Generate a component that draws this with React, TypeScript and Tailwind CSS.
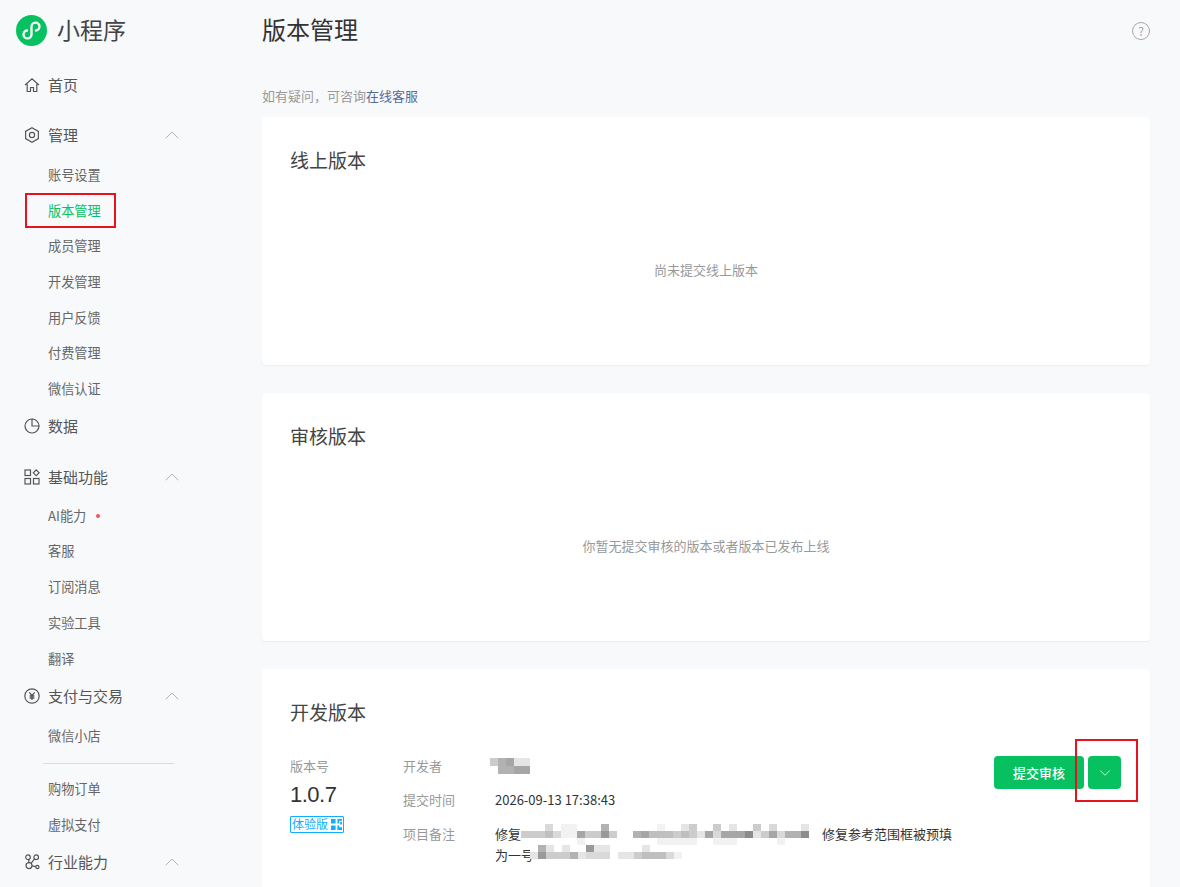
import React from 'react';
import { ChevronUp, ChevronDown } from 'lucide-react';

const FONT = '"Noto Sans CJK SC", "Liberation Sans", sans-serif';

const iconProps = {
  width: 16,
  height: 16,
  viewBox: '0 0 16 16',
  fill: 'none',
  stroke: 'currentColor',
  strokeWidth: 1.2,
};

const HomeIcon = () => (
  <svg {...iconProps}>
    <path d="M1 8l7-6.2L15 8M3.2 7v7.5h3.3v-4h3v4h3.3V7" />
  </svg>
);

const HexIcon = () => (
  <svg {...iconProps}>
    <path d="M8 .8l6.4 3.6v7.2L8 15.2l-6.4-3.6V4.4z" />
    <circle cx="8" cy="8" r="2.6" />
  </svg>
);

const PieIcon = () => (
  <svg {...iconProps}>
    <path d="M8 1a7 7 0 1 0 7 7H8z" />
    <path d="M8 1a7 7 0 0 1 7 7" />
  </svg>
);

const GridIcon = () => (
  <svg {...iconProps}>
    <rect x="1" y="1" width="5.5" height="5.5" />
    <rect x="1" y="9.5" width="5.5" height="5.5" />
    <rect x="9.5" y="9.5" width="5.5" height="5.5" />
    <path d="M12.2.9l2.9 2.9-2.9 2.9-2.9-2.9z" />
  </svg>
);

const YuanIcon = () => (
  <svg {...iconProps}>
    <circle cx="8" cy="8" r="7.2" />
    <path d="M5.4 4.4L8 7.6l2.6-3.2M8 7.6v4.4M5.6 8h4.8M5.6 10h4.8" strokeWidth="1.3" />
  </svg>
);

const NodesIcon = () => (
  <svg {...iconProps}>
    <circle cx="4" cy="3.2" r="2.3" />
    <circle cx="12.2" cy="3.2" r="2.3" />
    <circle cx="5" cy="11.6" r="3" />
    <circle cx="13.4" cy="13" r="1.6" />
    <path d="M4.6 5.4l.4 3.2M10.6 4.8L7 9.4M8 11.9l3.9.7" />
  </svg>
);

const MainItem = ({ icon, label, expandable = false, className = '' }: { icon: React.ReactNode; label: string; expandable?: boolean; className?: string }) => (
  <div className={`flex items-center h-[24px] pl-[24px] pr-[78px] text-[15px] text-[#555] ${className}`}>
    <span className="w-[24px] shrink-0 flex text-[#555]">{icon}</span>
    <span className="flex-1">{label}</span>
    {expandable && <ChevronUp className="w-[24px] h-[24px] text-[#b4b4b4]" strokeWidth={1} />}
  </div>
);

const SubItem = ({ label, active = false, dot = false, boxed = false }: { label: string; active?: boolean; dot?: boolean; boxed?: boolean }) => (
  <div className={`relative flex items-center h-[35.7px] pl-[48px] text-[13.2px] ${active ? 'text-[#07c160]' : 'text-[#666]'}`}>
    {label}
    {dot && <span className="ml-[10px] w-[4px] h-[4px] rounded-full bg-[#fa5151]" />}
    {boxed && <span className="absolute left-[25px] top-0 w-[91px] h-[35px] border-2 border-[#e8121e]" />}
  </div>
);

const Sidebar = () => (
  <aside className="w-[262px] shrink-0">
    <div className="flex items-center h-[60px] pl-[16px]">
      <svg width="31" height="31" viewBox="0 0 31 31" className="shrink-0">
        <circle cx="15.5" cy="15.5" r="15.5" fill="#07c160" />
        <path d="M11 15.5a4 4 0 1 0 4.5 4v-8a4 4 0 1 1 4.5 4" fill="none" stroke="#fff" strokeWidth="2.3" strokeLinecap="round" />
      </svg>
      <span className="ml-[10px] -mt-[2px] text-[23px] text-[#444]">小程序</span>
    </div>
    <MainItem icon={<HomeIcon />} label="首页" className="mt-[13px]" />
    <MainItem icon={<HexIcon />} label="管理" expandable className="mt-[26px]" />
    <div className="mt-[10px]">
      <SubItem label="账号设置" />
      <SubItem label="版本管理" active boxed />
      <SubItem label="成员管理" />
      <SubItem label="开发管理" />
      <SubItem label="用户反馈" />
      <SubItem label="付费管理" />
      <SubItem label="微信认证" />
    </div>
    <MainItem icon={<PieIcon />} label="数据" className="mt-[7px]" />
    <MainItem icon={<GridIcon />} label="基础功能" expandable className="mt-[27px]" />
    <div className="mt-[9px]">
      <SubItem label="AI能力" dot />
      <SubItem label="客服" />
      <SubItem label="订阅消息" />
      <SubItem label="实验工具" />
      <SubItem label="翻译" />
    </div>
    <MainItem icon={<YuanIcon />} label="支付与交易" expandable className="mt-[8px]" />
    <div className="mt-[10px]">
      <SubItem label="微信小店" />
      <div className="ml-[43px] w-[131px] h-px bg-[#dcdde0] mt-[9px] mb-[7px]" />
      <SubItem label="购物订单" />
      <SubItem label="虚拟支付" />
    </div>
    <MainItem icon={<NodesIcon />} label="行业能力" expandable className="mt-[8px]" />
  </aside>
);

const EmptyCard = ({ title, text }: { title: string; text: string }) => (
  <section className="h-[248px] bg-white rounded-[4px] shadow-[0_1px_2px_rgba(0,0,0,0.06)] px-[28px] pt-[29px] flex flex-col">
    <h2 className="text-[19px] leading-[28px] text-[#444] font-normal">{title}</h2>
    <p className="text-center text-[13px] leading-[20px] text-[#999] mt-[86px]">{text}</p>
  </section>
);

// 打码区块：每个字符是一格的灰度，0-9 对应 0-45% 的黑
const Pixelated = ({ rows, w, h, className = '' }: { rows: string[]; w: number; h: number; className?: string }) => (
  <svg width={rows[0].length * w} height={rows.length * h} className={`shrink-0 ${className}`}>
    {rows.flatMap((row, y) =>
      row.split('').map((c, x) =>
        c === '.' ? null : (
          <rect key={`${x}-${y}`} x={x * w} y={y * h} width={w} height={h} fill="#000" opacity={Number(c) / 20} />
        ),
      ),
    )}
  </svg>
);

const DevRow = ({ label, children, className = '' }: { label: string; children: React.ReactNode; className?: string }) => (
  <div className={`flex text-[13px] leading-[20px] ${className}`}>
    <span className="w-[92px] shrink-0 text-[#999]">{label}</span>
    <div className="text-[#333]">{children}</div>
  </div>
);

const DevCard = () => (
  <section className="h-[260px] bg-white rounded-[4px] shadow-[0_1px_2px_rgba(0,0,0,0.06)] px-[28px] pt-[29px]">
    <h2 className="text-[19px] leading-[28px] text-[#444] font-normal">开发版本</h2>
    <div className="flex mt-[30px]">
      <div className="w-[113px] shrink-0">
        <div className="text-[13px] leading-[20px] text-[#999]">版本号</div>
        <div className="text-[22px] leading-[30px] mt-[4px] tracking-[-0.5px] text-[#333]" style={{ fontFamily: '"Liberation Sans", sans-serif' }}>1.0.7</div>
        <div className="inline-flex items-center h-[17px] mt-[1px] px-[1px] border border-[#10aeff] rounded-[1px] text-[12px] leading-none text-[#10aeff]">
          体验版
          <svg width="11" height="11" viewBox="0 0 12 12" fill="#10aeff" className="ml-[3px]">
            <path d="M0 0h5v5H0zM7 0h5v2H9v3H7zM0 7h5v5H0zM7 7h2v2h3v3H7zM10 3h2v3h-2z" />
          </svg>
        </div>
      </div>
      <div className="flex-1">
        <DevRow label="开发者">
          <Pixelated w={8} h={8} className="mt-[2px] -ml-[5px]" rows={['46722', '.6677']} />
        </DevRow>
        <DevRow label="提交时间" className="mt-[14px]">2026-09-13 17:38:43</DevRow>
        <DevRow label="项目备注" className="mt-[14px]">
          <div className="w-[470px]">
            <div className="flex items-start h-[21px] whitespace-nowrap">
              修复
              <Pixelated
                w={8}
                h={7}
                rows={[
                  '...3.11...6......1..24..4.2..4.3...2',
                  '444531174484..6755545427377792473669',
                  '.......1.........11111..111.....1...',
                ]}
              />
              <span className="ml-[13px]">修复参考范围框被预填</span>
            </div>
            <div className="flex items-start h-[21px] whitespace-nowrap">
              为一号
              <Pixelated
                w={8}
                h={7}
                className="-ml-[4px] bg-white"
                rows={['.62.2..822....2....', '2844462333.22455531']}
              />
            </div>
          </div>
        </DevRow>
      </div>
      <div className="flex gap-[4px] relative h-[33px] mr-[1px]">
        <button className="w-[90px] h-[33px] rounded-[4px] bg-[#07c160] text-white text-[13px] font-medium">提交审核</button>
        <button className="w-[33px] h-[33px] rounded-[4px] bg-[#07c160] text-white flex items-center justify-center">
          <ChevronDown className="w-[18px] h-[18px]" strokeWidth={1} />
        </button>
        <span className="absolute -top-[17px] left-[81px] w-[63px] h-[63px] border-2 border-[#e8121e]" />
      </div>
    </div>
  </section>
);

export default function App() {
  return (
    <div className="h-[887px] overflow-hidden bg-[#f8f9fb] flex" style={{ fontFamily: FONT }}>
      <Sidebar />
      <main className="w-[888px] shrink-0">
        <div className="flex items-center justify-between h-[58px]">
          <h1 className="text-[24px] text-[#333] font-normal">版本管理</h1>
          <span className="mt-[4px] w-[18px] h-[18px] rounded-full border border-[#a8a8a8] text-[12px] leading-[16px] text-center text-[#a8a8a8]">?</span>
        </div>
        <p className="mt-[28px] text-[13px] leading-[20px] text-[#999]">
          如有疑问，可咨询<span className="text-[#576b95]">在线客服</span>
        </p>
        <div className="mt-[11px] flex flex-col gap-[28px]">
          <EmptyCard title="线上版本" text="尚未提交线上版本" />
          <EmptyCard title="审核版本" text="你暂无提交审核的版本或者版本已发布上线" />
          <DevCard />
        </div>
      </main>
    </div>
  );
}
